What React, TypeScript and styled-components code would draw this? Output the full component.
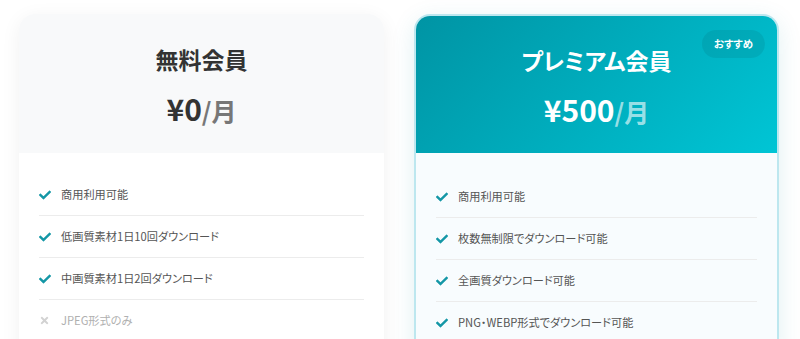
import React from 'react';
import styled, { createGlobalStyle } from 'styled-components';
import { FaCheck, FaTimes } from 'react-icons/fa';

interface Feature {
  label: string;
  enabled: boolean;
}

interface Plan {
  name: string;
  amount: string;
  featured?: boolean;
  features: Feature[];
}

const GlobalStyle = createGlobalStyle`
  html, body {
    margin: 0;
    padding: 0;
    overflow: hidden;
    background: #ffffff;
  }

  body {
    font-family: "Noto Sans CJK JP", "Noto Sans", sans-serif;
    font-feature-settings: "palt";
    -webkit-font-smoothing: antialiased;
  }

  * {
    box-sizing: border-box;
  }
`;

const Page = styled.div`
  display: grid;
  grid-template-columns: 1fr 1fr;
  gap: 30px;
  padding: 14px 21px 0 19px;
`;

const Card = styled.div<{ $featured?: boolean }>`
  position: relative;
  display: flex;
  flex-direction: column;
  border-radius: 16px;
  overflow: hidden;
  background: ${(p) => (p.$featured ? '#f8fcfe' : '#ffffff')};
  border: ${(p) => (p.$featured ? '2px solid #bde7ef' : 'none')};
  box-shadow: ${(p) =>
    p.$featured
      ? '0 6px 24px rgba(0, 140, 160, 0.12)'
      : '0 4px 20px rgba(0, 0, 0, 0.06)'};
`;

const Header = styled.div<{ $featured?: boolean }>`
  display: flex;
  flex-direction: column;
  align-items: center;
  padding: ${(p) => (p.$featured ? '28px 20px 24px' : '29px 20px 25px')};
  background: ${(p) =>
    p.$featured
      ? 'linear-gradient(135deg, #0094a4 0%, #00c5d5 100%)'
      : '#f8f9fa'};
  color: ${(p) => (p.$featured ? '#ffffff' : '#333333')};
`;

const Title = styled.h2`
  margin: 0;
  font-size: 23px;
  line-height: 32px;
  font-weight: 700;
`;

const Price = styled.div`
  margin-top: 15px;
  font-size: 30px;
  line-height: 36px;
  font-weight: 700;
`;

const Period = styled.span<{ $featured?: boolean }>`
  font-size: 25px;
  color: ${(p) => (p.$featured ? 'rgba(255, 255, 255, 0.62)' : '#777777')};
`;

const Badge = styled.span`
  position: absolute;
  top: 14px;
  right: 12px;
  padding: 6px 12px;
  border-radius: 14px;
  background: rgba(0, 0, 0, 0.07);
  color: #ffffff;
  font-size: 10.4px;
  line-height: 16px;
  font-weight: 700;
`;

const FeatureList = styled.ul<{ $featured?: boolean }>`
  list-style: none;
  margin: 0;
  padding: ${(p) => (p.$featured ? '23px 20px 20px' : '21px 20px 20px')};
`;

const FeatureItem = styled.li<{ $enabled: boolean }>`
  display: flex;
  align-items: center;
  gap: 9px;
  padding: 12px 0;
  border-bottom: 1px solid #ececec;
  font-size: 11.2px;
  line-height: 17px;
  color: ${(p) => (p.$enabled ? '#555555' : '#b0b0b0')};

  &:last-child {
    border-bottom: none;
  }
`;

const IconBox = styled.span<{ $enabled: boolean }>`
  display: flex;
  align-items: center;
  justify-content: flex-start;
  width: 13px;
  flex-shrink: 0;
  color: ${(p) => (p.$enabled ? '#1497a6' : '#d2d2d2')};
`;

const plans: Plan[] = [
  {
    name: '無料会員',
    amount: '¥0',
    features: [
      { label: '商用利用可能', enabled: true },
      { label: '低画質素材1日10回ダウンロード', enabled: true },
      { label: '中画質素材1日2回ダウンロード', enabled: true },
      { label: 'JPEG形式のみ', enabled: false },
    ],
  },
  {
    name: 'プレミアム会員',
    amount: '¥500',
    featured: true,
    features: [
      { label: '商用利用可能', enabled: true },
      { label: '枚数無制限でダウンロード可能', enabled: true },
      { label: '全画質ダウンロード可能', enabled: true },
      { label: 'PNG・WEBP形式でダウンロード可能', enabled: true },
    ],
  },
];

const PlanCard: React.FC<{ plan: Plan }> = ({ plan }) => (
  <Card $featured={plan.featured}>
    <Header $featured={plan.featured}>
      <Title>{plan.name}</Title>
      <Price>
        {plan.amount}
        <Period $featured={plan.featured}>/月</Period>
      </Price>
    </Header>
    {plan.featured && <Badge>おすすめ</Badge>}
    <FeatureList $featured={plan.featured}>
      {plan.features.map((f) => (
        <FeatureItem key={f.label} $enabled={f.enabled}>
          <IconBox $enabled={f.enabled}>
            {f.enabled ? <FaCheck size={12} /> : <FaTimes size={11} />}
          </IconBox>
          {f.label}
        </FeatureItem>
      ))}
    </FeatureList>
  </Card>
);

export default function App() {
  return (
    <>
      <GlobalStyle />
      <Page>
        {plans.map((plan) => (
          <PlanCard key={plan.name} plan={plan} />
        ))}
      </Page>
    </>
  );
}
